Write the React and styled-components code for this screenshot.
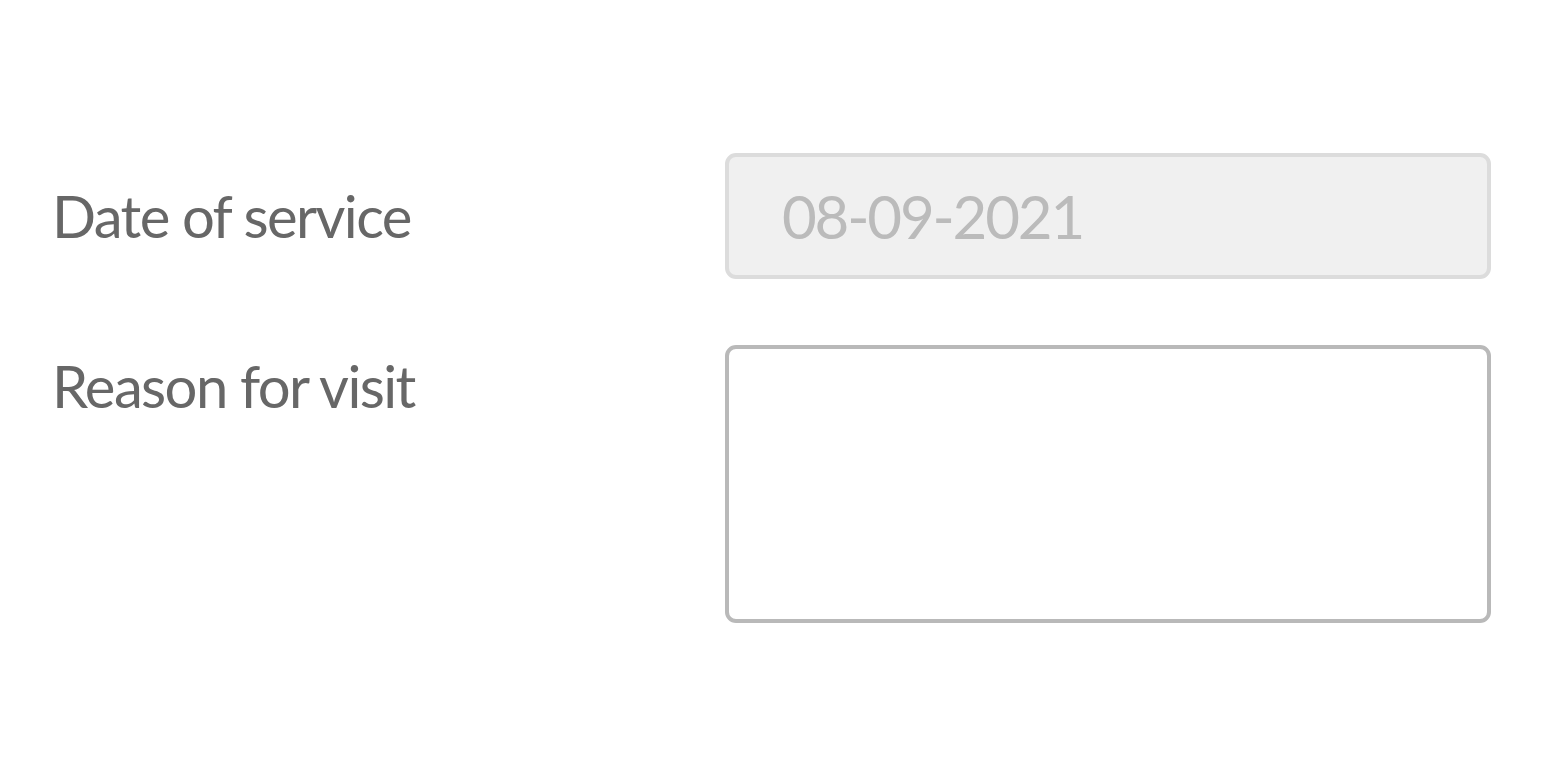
import React from "react";
import styled, { createGlobalStyle } from "styled-components";

const Global = createGlobalStyle`
  html, body { margin: 0; padding: 0; background: #fff; }
  body { font-family: "Source Sans Pro", Lato, "Noto Sans", sans-serif; }
  * { box-sizing: border-box; }
`;

const Form = styled.form`
  display: grid;
  grid-template-columns: 673px 766px;
  row-gap: 66px;
  padding: 153px 57px 0 52px;
`;

const Label = styled.label`
  font-size: 58px;
  line-height: 1;
  color: #676767;
  letter-spacing: -1.6px;
  align-self: ${(p) => (p.$center ? "center" : "start")};
  padding-top: ${(p) => p.$top || 0}px;
`;

const DateInput = styled.input`
  width: 100%;
  height: 126px;
  border: 4px solid #dcdcdc;
  border-radius: 11px;
  background: #f0f0f0;
  color: #bbbbbb;
  font-family: inherit;
  font-size: 60px;
  letter-spacing: -2.2px;
  padding: 0 0 0 53px;
  outline: none;
  &:disabled { color: #bbbbbb; -webkit-text-fill-color: #bbbbbb; opacity: 1; }
`;

const TextArea = styled.textarea`
  width: 100%;
  height: 278px;
  border: 4px solid #b9b9b9;
  border-radius: 11px;
  background: #fff;
  resize: none;
  font-family: inherit;
  font-size: 40px;
  outline: none;
  display: block;
`;

export default function App() {
  return (
    <>
      <Global />
      <Form>
        <Label $center htmlFor="dos">Date of service</Label>
        <DateInput id="dos" value="08-09-2021" disabled readOnly />
        <Label $top={12} htmlFor="reason">Reason for visit</Label>
        <TextArea id="reason" />
      </Form>
    </>
  );
}
